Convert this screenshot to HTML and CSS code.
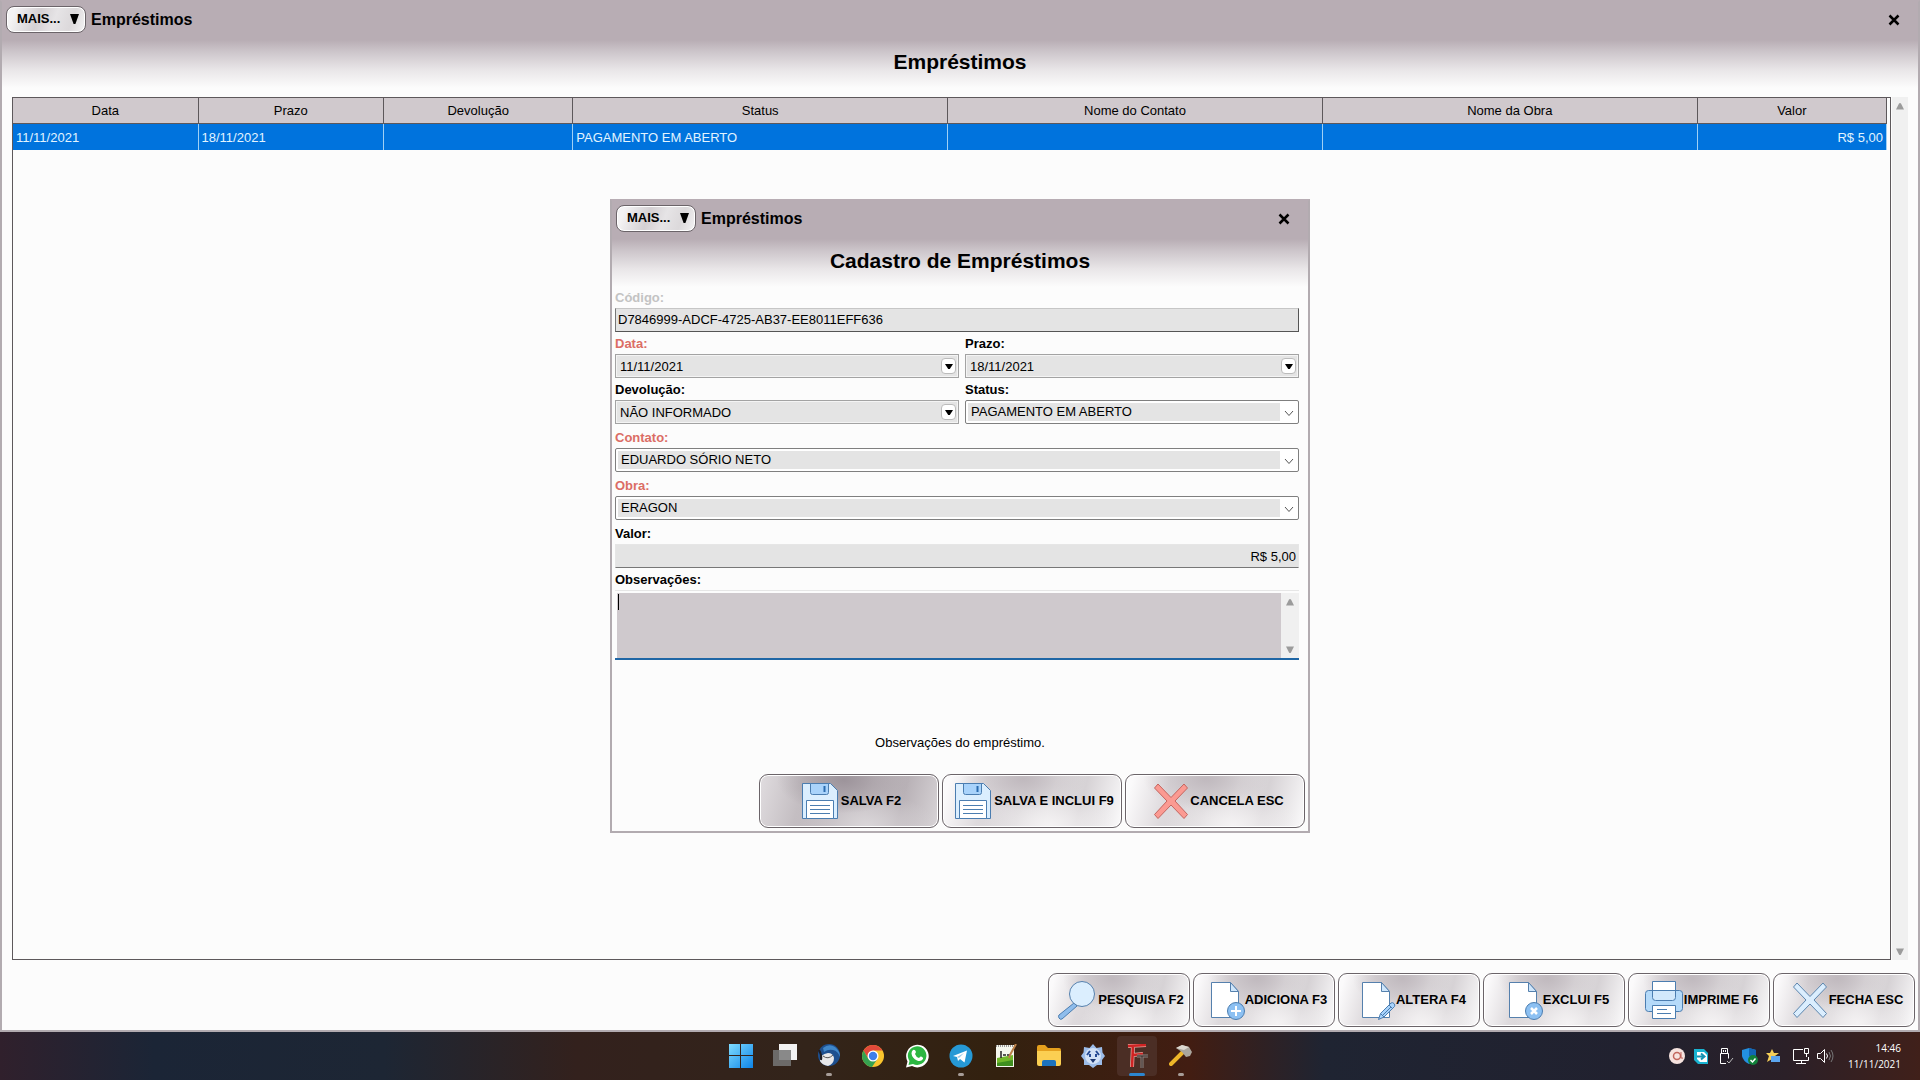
FILE: index.html
```html
<!DOCTYPE html>
<html lang="pt-BR">
<head>
  <meta charset="UTF-8" />
  <meta name="viewport" content="width=device-width,initial-scale=1" />
  <title>Empréstimos</title>
  <link rel="stylesheet" href="styles.css">
</head>
<body>
  <!-- shared icons -->
  <svg class="sprite" aria-hidden="true">
    <symbol id="i-doc" viewBox="0 0 40 40">
      <path d="M6.500 2.500h19l8 9v26h-27z" fill="#fff" stroke="#5580ad" />
      <path d="M25.500 2.500v9h8z" fill="#cfe6fb" stroke="#5580ad" />
    </symbol>
    <symbol id="i-floppy" viewBox="0 0 40 40">
      <path d="M3.500 2.500h28l7 7v28h-35z" fill="#dbeefe" stroke="#4b7db0" />
      <path d="M11.500 2.500h18v9q0 2-2 2h-14q-2 0-2-2z" fill="#a9d3fb" stroke="#4b7db0" />
      <path d="M25.500 5v6" stroke="#2b6cb0" stroke-width="2" />
      <path d="M7.500 37.500v-18h27v18z" fill="#fff" stroke="#4b7db0" />
      <path d="M11 24.500h20M11 28.500h20M11 32.500h20" stroke="#4b7db0" />
    </symbol>
    <symbol id="i-x" viewBox="-3 0 40 40">
      <path d="M7 3l13 13.500L33 3l3.500 4L24 20l12.500 13.500-3.500 4L20 24 7 37.500l-3.500-4L16 20 3.500 7z" stroke-linejoin="round" />
    </symbol>
    <symbol id="i-close" viewBox="0 0 12 12">
      <path d="M1.500 1.500l9 9M10.500 1.500l-9 9" stroke="#000" stroke-width="2.500" />
    </symbol>
    <symbol id="i-chev" viewBox="0 0 18 18">
      <path d="M5 8l4 4.500L13 8" fill="none" stroke="#555" />
    </symbol>
    <symbol id="i-up" viewBox="0 0 10 8"><path d="M1 7.500L4 1.500q1-1 2 0l3 6z" fill="#9b9b9b" /></symbol>
    <symbol id="i-down" viewBox="0 0 10 8"><path d="M1 .5l3 6q1 1 2 0l3-6z" fill="#9b9b9b" /></symbol>
    <symbol id="i-drop" viewBox="0 0 10 10" preserveAspectRatio="none"><path d="M0 0h10L6 10H4z" fill="#000" /></symbol>
  </svg>

  <main class="window">
    <header class="window-head">
      <div class="titlebar">
        <button class="more" type="button">MAIS... <svg><use href="#i-drop" /></svg></button>
        <span class="title">Empréstimos</span>
        <button class="close" type="button" aria-label="Fechar"><svg><use href="#i-close" /></svg></button>
      </div>
      <h1>Empréstimos</h1>
    </header>

    <div class="list">
      <div class="list-box">
        <table>
          <colgroup>
            <col class="col-date"><col class="col-date"><col class="col-small">
            <col class="col-wide"><col class="col-wide"><col class="col-wide"><col class="col-small">
          </colgroup>
          <thead>
            <tr><th>Data</th><th>Prazo</th><th>Devolução</th><th>Status</th><th>Nome do Contato</th><th>Nome da Obra</th><th>Valor</th></tr>
          </thead>
          <tbody>
            <tr class="selected"><td>11/11/2021</td><td>18/11/2021</td><td></td><td>PAGAMENTO EM ABERTO</td><td></td><td></td><td class="money">R$ 5,00</td></tr>
          </tbody>
        </table>
      </div>
      <div class="scroll"><svg><use href="#i-up" /></svg><svg><use href="#i-down" /></svg></div>
    </div>

    <div class="actions">
      <button class="btn" type="button">
        <svg viewBox="0 0 40 40"><path d="M18 23l3 3L6 39q-2 1-3-1t0-3z" fill="#8fbdec" stroke="#4b7db0" /><circle cx="26" cy="14" r="12.500" fill="#dbeefe" stroke="#5580ad" /></svg>
        PESQUISA F2
      </button>
      <button class="btn" type="button">
        <svg viewBox="-2 0 40 40"><use href="#i-doc" /><circle cx="31" cy="31" r="8.500" fill="#8cc0f2" stroke="#4b7db0" /><path d="M31 26v10M26 31h10" stroke="#fff" stroke-width="2" /></svg>
        ADICIONA F3
      </button>
      <button class="btn" type="button">
        <svg viewBox="-2 0 40 40"><use href="#i-doc" /><path d="M22.500 39.500l2-6L35 23q1.500-1 3 .5t.5 3L28 37z" fill="#a9d3fb" stroke="#4b7db0" /><path d="M24.500 33.500l3.500 3.500M33 25l3.500 3.500M27 35l8-8" stroke="#4b7db0" fill="none" /></svg>
        ALTERA F4
      </button>
      <button class="btn" type="button">
        <svg viewBox="-2 0 40 40"><use href="#i-doc" /><circle cx="31" cy="31" r="8.500" fill="#8cc0f2" stroke="#4b7db0" /><path d="M28 28l6 6M34 28l-6 6" stroke="#fff" stroke-width="2.500" /></svg>
        EXCLUI F5
      </button>
      <button class="btn" type="button">
        <svg viewBox="-2 0 40 40"><rect x="1.500" y="10.500" width="37" height="21" rx="3" fill="#b5daf9" stroke="#4b7db0" /><path d="M8.500 1.500h23v16q0 3-3 3h-17q-3 0-3-3z" fill="#d3e9fc" stroke="#4b7db0" /><path d="M9 2h22v8H9z" fill="#fff" /><path d="M8.500 10.500h23" stroke="#4b7db0" /><path d="M8.500 25.500h23v13h-23z" fill="#fff" stroke="#4b7db0" /><path d="M13 29.500h10M13 33.500h14" stroke="#4b7db0" /></svg>
        IMPRIME F6
      </button>
      <button class="btn" type="button">
        <svg class="x-blue"><use href="#i-x" /></svg>
        FECHA ESC
      </button>
    </div>

    <div class="overlay">
      <form class="window dialog" onsubmit="return false">
        <div class="window-head">
          <div class="titlebar">
            <button class="more" type="button">MAIS... <svg><use href="#i-drop" /></svg></button>
            <span class="title">Empréstimos</span>
            <button class="close" type="button" aria-label="Fechar"><svg><use href="#i-close" /></svg></button>
          </div>
          <h2>Cadastro de Empréstimos</h2>
        </div>

        <div class="fields">
          <div class="field">
            <label class="disabled" for="codigo">Código:</label>
            <input class="box box-code" id="codigo" type="text" value="D7846999-ADCF-4725-AB37-EE8011EFF636" readonly>
          </div>
          <div class="pair">
            <div class="field">
              <label class="required" for="data">Data:</label>
              <div class="box box-date"><input id="data" type="text" value="11/11/2021"><button type="button" aria-label="Calendário"><svg><use href="#i-drop" /></svg></button></div>
            </div>
            <div class="field">
              <label for="prazo">Prazo:</label>
              <div class="box box-date"><input id="prazo" type="text" value="18/11/2021"><button type="button" aria-label="Calendário"><svg><use href="#i-drop" /></svg></button></div>
            </div>
          </div>
          <div class="pair">
            <div class="field">
              <label for="devolucao">Devolução:</label>
              <div class="box box-date"><input id="devolucao" type="text" value="NÃO INFORMADO"><button type="button" aria-label="Calendário"><svg><use href="#i-drop" /></svg></button></div>
            </div>
            <div class="field">
              <label for="status">Status:</label>
              <div class="box box-combo"><select id="status"><option>PAGAMENTO EM ABERTO</option></select><svg><use href="#i-chev" /></svg></div>
            </div>
          </div>
          <div class="field spaced">
            <label class="required" for="contato">Contato:</label>
            <div class="box box-combo"><select id="contato"><option>EDUARDO SÓRIO NETO</option></select><svg><use href="#i-chev" /></svg></div>
          </div>
          <div class="field spaced">
            <label class="required" for="obra">Obra:</label>
            <div class="box box-combo"><select id="obra"><option>ERAGON</option></select><svg><use href="#i-chev" /></svg></div>
          </div>
          <div class="field spaced">
            <label for="valor">Valor:</label>
            <input class="box box-money" id="valor" type="text" value="R$ 5,00">
          </div>
          <div class="field">
            <label for="obs">Observações:</label>
            <div class="memo">
              <textarea id="obs"></textarea>
              <span class="caret"></span>
              <div class="scroll"><svg><use href="#i-up" /></svg><svg><use href="#i-down" /></svg></div>
            </div>
          </div>
        </div>

        <p class="hint">Observações do empréstimo.</p>

        <div class="actions">
          <button class="btn btn-active" type="submit"><svg><use href="#i-floppy" /></svg>SALVA F2</button>
          <button class="btn" type="button"><svg><use href="#i-floppy" /></svg>SALVA E INCLUI F9</button>
          <button class="btn" type="button"><svg class="x-red"><use href="#i-x" /></svg>CANCELA ESC</button>
        </div>
      </form>
    </div>
  </main>

  <footer class="taskbar">
    <div class="apps">
      <div class="app">
        <svg viewBox="0 0 24 24"><defs><linearGradient id="win" x2="1" y2="1"><stop offset="0" stop-color="#7fdcff" /><stop offset="1" stop-color="#0d84e8" /></linearGradient></defs><path d="M0 0h11v11H0zM12 0h12v11H12zM0 12h11v12H0zM12 12h12v12H12z" fill="url(#win)" /></svg>
      </div>
      <div class="app">
        <svg viewBox="0 0 24 24"><path d="M6 0h18v16H6z" fill="#f2f2f2" /><path d="M0 6h18v16H0z" fill="#777" opacity=".85" /></svg>
      </div>
      <div class="app open">
        <svg viewBox="0 0 24 24"><circle cx="12" cy="11" r="11" fill="#1d4f8f" /><path d="M6 4Q12-1 18 3q5 4 5 10-2-6-7-7-5-1-9 2z" fill="#3f86c8" /><path d="M3 17q0-7 8-8 5 0 6 5 0 6-6 8-6-1-8-5z" fill="#e8e8ea" /><path d="M6 12q5 4 10-1" fill="none" stroke="#555" /><path d="M2 6q3 5 2 10" stroke="#1c1c24" stroke-width="2" fill="none" /></svg>
      </div>
      <div class="app">
        <svg viewBox="0 0 24 24"><circle cx="12" cy="12" r="11" fill="#fbc52d" /><path d="M2.500 6.500A11 11 0 0 1 21.500 6.500H12L7.300 14.700z" fill="#e1493a" /><path d="M2.500 6.500A11 11 0 0 0 11 23l5.700-8.500L12 17l-4.500-2z" fill="#36a251" /><circle cx="12" cy="12" r="5.500" fill="#fff" /><circle cx="12" cy="12" r="4.200" fill="#3f7fe8" /></svg>
      </div>
      <div class="app">
        <svg viewBox="0 0 24 24"><path d="M1 23.500l1.500-6A11.300 11.300 0 1 1 7 22z" fill="#fff" /><path d="M3.500 21l1-4A9.300 9.300 0 1 1 8 20z" fill="#2cb742" /><path d="M8 6q2-1 3 2l-1 2q1 3 4 4l1.500-1.500q3 .5 2.500 2.500-2 3-6 1.500Q7 14 6.500 9.500 6.500 7 8 6z" fill="#fff" /></svg>
      </div>
      <div class="app open">
        <svg viewBox="0 0 24 24"><circle cx="12" cy="12" r="11.500" fill="#2699d6" /><path d="M4 12l14-5.500-2.500 12-4.500-3.500-2 2-1-4z" fill="#fff" /><path d="M8 13l7-4-5 5z" fill="#9cc9e4" /></svg>
      </div>
      <div class="app">
        <svg viewBox="0 0 24 24"><path d="M3 1h18v22H3z" fill="#f5f7ee" /><path d="M4 14l16-3v11H4z" fill="#72b82a" /><path d="M4 19l16-3v6H4z" fill="#3f8f1f" /><path d="M3 2h18" stroke="#999" stroke-width="2" stroke-dasharray="1 1" /><path d="M8 7v7M10 11h3M14 11h3" stroke="#222" stroke-width="1.500" /><path d="M23 0l-6 11-1 3" stroke="#bd824a" stroke-width="2" fill="none" /></svg>
      </div>
      <div class="app">
        <svg viewBox="0 0 24 24"><path d="M0 3q0-2 2-2h6l3 3h11q2 0 2 2v4H0z" fill="#e5a01d" /><path d="M0 7h24v13q0 2-2 2H2q-2 0-2-2z" fill="#fbcf52" /><path d="M5 22v-4q0-2 2-2h10q2 0 2 2v4z" fill="#1d73bd" /></svg>
      </div>
      <div class="app">
        <svg viewBox="0 0 24 24"><path d="M12 0l3.500 4 5.500-1 .5 5.500L24 12l-3 4v5h-5l-4 3-4-3H3v-5l-3-4 2.500-3.500L3 3l5.500 1z" fill="#9cbce8" /><circle cx="12" cy="12" r="8" fill="#d3e2f6" /><path d="M9 7l-3 4M15 7l3 4M9 10v3M15 10v3" stroke="#274b94" stroke-width="2" /><path d="M9 15h6l-3 4z" fill="#1e3973" /></svg>
      </div>
      <div class="app current">
        <svg viewBox="0 0 24 24"><path d="M3 2l18-1M8 2L7 23M8 11l10-1" fill="none" stroke="#e0a49c" stroke-width="4" /><path d="M3 2l18-1M8 2L7 23M8 11l10-1" fill="none" stroke="#cf2323" stroke-width="2.500" /><path d="M12 12h11M17 12v12" fill="none" stroke="#8d8582" stroke-width="3" /><path d="M12 12h11M17 12v12" fill="none" stroke="#3a2a26" /></svg>
      </div>
      <div class="app open">
        <svg viewBox="0 0 24 24"><path d="M2 20L14 8" stroke="#eeb629" stroke-width="4" stroke-linecap="round" /><path d="M7 4l6-3 7 2 3 5-2 4-4 1-4-5z" fill="#aaa59d" /><path d="M7 4l6-3 7 2-5 3z" fill="#ddd8d0" /></svg>
      </div>
    </div>
    <div class="tray">
      <svg viewBox="0 0 24 24"><circle cx="12" cy="12" r="8" fill="#f6e3df" /><circle cx="12" cy="12" r="3.500" fill="none" stroke="#c2655c" stroke-width="1.500" /><path d="M16 8v5q0 2 2 1" fill="none" stroke="#c2655c" /></svg>
      <svg viewBox="0 0 24 24"><path d="M5 5h10l4 4v11H9l-4-4z" fill="#19b3d1" /><path d="M8 8h7l3 3v7h-7l-3-3z" fill="#fff" /><path d="M8 12.500h7M12 9.500l3.500 3-3.500 3" fill="none" stroke="#1593b2" stroke-width="2" /></svg>
      <svg viewBox="0 0 24 24" fill="none" stroke="#fff"><path d="M8.500 9.500v-5h6v5M13 19.500H7.500v-10h8v5M10.500 6v2M12.500 6v2" /><path d="M14 17l2 2 4-5" stroke="#bbb" /></svg>
      <svg viewBox="0 0 24 24"><path d="M12 4l7 2v6q-1 5-7 8-6-3-7-8V6z" fill="#2390e0" /><path d="M12 4l7 2v6h-7z" fill="#1266b5" /><circle cx="16" cy="16" r="5" fill="#12813b" /><path d="M13.500 16l2 2 3-3.500" fill="none" stroke="#fff" stroke-width="1.500" /></svg>
      <svg viewBox="0 0 24 24"><path d="M11 5l2 4h5l-4 3 1 5-4-2-5 3 2-6-3-3h4z" fill="#f5cf58" /><path d="M10 12h9v6h-9z" fill="#5ba5ee" /></svg>
      <svg class="network" viewBox="0 0 24 24" fill="none" stroke="#fff"><path d="M14 5.500H4.500v11h15V13M12.500 16.500v3M7 19.500h10M15.500 4.500h4v5h-4zM17.500 9.500V13" /></svg>
      <svg viewBox="0 0 24 24" fill="none" stroke="#fff"><path d="M4.500 9.500h3l4-4v13l-4-4h-3zM13.500 9.500q2 2.500 0 5" /><path d="M16 8q3 4 0 8M18 6q4 6 0 12" stroke="#777" /></svg>
      <div class="clock"><span>14:46</span><span>11/11/2021</span></div>
    </div>
  </footer>
</body>
</html>
```

FILE: styles.css
```css
* {
  box-sizing: border-box;
}
body {
  margin: 0;
  height: 100vh;
  display: flex;
  flex-direction: column;
  font-family: "Liberation Sans", Arial, sans-serif;
  font-size: 13px;
  color: #000;
  background: #fcfcfc;
  overflow: hidden;
}
button, input, select, textarea {
  font: inherit;
  color: inherit;
}
button {
  padding: 0;
}
.sprite {
  display: none;
}

/* windows */
.window {
  position: relative;
  flex: 1;
  display: flex;
  flex-direction: column;
  min-height: 0;
  border: 2px solid #b2abb0;
  border-top-color: #b8adb4;
  background: #fcfcfc;
}
.window-head {
  padding: 4px 4px 0;
  height: 89px;
  background: linear-gradient(#b8adb4 38px, #cdc6cb 50px, #e9e6e8 68px, #fcfcfc 86px);
}
.titlebar {
  display: flex;
  align-items: center;
  gap: 5px;
}
.title {
  flex: 1;
  font-size: 16px;
  font-weight: bold;
}
.more {
  display: flex;
  align-items: center;
  justify-content: space-between;
  width: 80px;
  height: 27px;
  padding: 0 6px 2px 10px;
  border: 1px solid #6b6469;
  border-radius: 8px;
  font-weight: bold;
  background: linear-gradient(110deg, #f4f3f4 10%, #d4d0d3 40%, #e6e4e6 60%, #dcd9db 80%, #f4f3f4);
  box-shadow: inset 0 0 0 1px #fff;
}
.more svg {
  width: 9px;
  height: 10px;
}
.close {
  display: flex;
  justify-content: center;
  width: 40px;
  border: none;
  background: none;
}
.close svg {
  width: 12px;
  height: 12px;
}
h1, h2 {
  margin: 17px 0 0;
  font-size: 21px;
  line-height: 24px;
  text-align: center;
}

/* loan list */
.list {
  flex: 1;
  display: flex;
  gap: 1px;
  padding: 6px 10px 13px;
}
.list-box {
  flex: 1;
  padding-right: 3px;
  border: 1px solid #5d585b;
}
table {
  width: 100%;
  table-layout: fixed;
  border-spacing: 0;
}
.col-date {
  width: 9.9%;
}
.col-small {
  width: 10.1%;
}
.col-wide {
  width: 20%;
}
th, td {
  height: 26px;
  padding: 0 3px;
  border-right: 1px solid #5d585b;
  font-weight: normal;
}
th {
  background: #d0c9cd;
  border-bottom: 1px solid #5d585b;
}
.selected td {
  background: #0073dd;
  color: #e2f4ff;
  border-right-color: #9fd0f5;
}
.money {
  text-align: right;
}
.scroll {
  display: flex;
  flex-direction: column;
  align-items: center;
  justify-content: space-between;
  width: 16px;
  padding: 5px 0 4px;
  background: #f0f0f0;
}
.scroll svg {
  width: 10px;
  height: 8px;
}

/* command buttons */
.actions {
  display: flex;
  justify-content: flex-end;
  gap: 3px;
  padding: 0 3px 3px;
}
.btn {
  display: flex;
  align-items: center;
  justify-content: center;
  gap: 2px;
  width: 142px;
  height: 54px;
  padding: 0 0 1px 2px;
  border: 1px solid #6b6469;
  border-radius: 9px;
  font-weight: bold;
  white-space: nowrap;
  background:
    radial-gradient(ellipse at 45% 8%, #c0b9be 0, rgba(192, 185, 190, 0) 45%),
    radial-gradient(ellipse at 60% 95%, #f4f2f3 0, rgba(244, 242, 243, 0) 45%),
    linear-gradient(105deg, #fbfafb 4%, #dedadd 24%, #d8d4d7 45%, #e2dfe1 60%, #d6d2d5 76%, #f8f7f8 98%);
  box-shadow: inset 0 0 0 1px #fff;
}
.btn svg {
  flex: none;
  width: 40px;
  height: 40px;
  overflow: visible;
}
.btn-active {
  background:
    radial-gradient(ellipse at 47% 10%, #9d949b 0, rgba(157, 148, 155, 0) 50%),
    radial-gradient(ellipse at 60% 95%, #d9d5d8 0, rgba(217, 213, 216, 0) 45%),
    linear-gradient(105deg, #dedadd 2%, #c4bec2 24%, #bdb6bb 45%, #c4bec2 60%, #b9b2b7 78%, #d8d4d7 100%);
}
.x-blue {
  fill: #dbeefe;
  stroke: #5d86ae;
}
.x-red {
  fill: #fb9a92;
  stroke: #c4655f;
}

/* loan form */
.overlay {
  position: absolute;
  inset: 0;
  display: flex;
  align-items: center;
  justify-content: center;
}
.dialog {
  flex: none;
  width: 700px;
}
.fields {
  padding: 0 9px 0 3px;
}
.pair {
  display: grid;
  grid-template-columns: 344px 1fr;
  gap: 6px;
}
.field {
  padding-bottom: 4px;
}
.spaced {
  padding-top: 2px;
}
label {
  display: block;
  height: 18px;
  line-height: 16px;
  font-weight: bold;
}
.required {
  color: #db6d65;
}
.disabled {
  color: #c3c3c3;
}
.box {
  display: flex;
  width: 100%;
  height: 24px;
  border: 1px solid #a3a3a3;
  background: #e4e4e4;
}
.box input, .box select {
  flex: 1;
  min-width: 0;
  border: none;
  outline: none;
  background: none;
}
.box-code {
  padding: 0 2px 2px;
  border-color: #c6c6c6 #555 #555 #777;
}
.box-date {
  box-shadow: inset 0 0 0 1px #f4f4f4;
}
.box-date input {
  padding: 0 4px;
}
.box-date button {
  width: 15px;
  margin: 3px 2px;
  border: 1px solid #bbb;
  border-radius: 4px;
  background: #fff;
  display: flex;
  align-items: center;
  justify-content: center;
}
.box-date svg {
  width: 8px;
  height: 5px;
}
.box-combo {
  padding: 2px 0 2px 2px;
  border-color: #7f7f7f;
  border-radius: 2px;
  background: #fff;
}
.box-combo select {
  appearance: none;
  padding: 0 3px 2px;
  background: #e4e4e4;
}
.box-combo svg {
  width: 18px;
  height: 18px;
}
.box-money {
  padding: 0 2px;
  border-color: #e6e6e6 #e6e6e6 #777;
  text-align: right;
}
.memo {
  position: relative;
  display: flex;
  height: 70px;
  padding: 2px 0 0 2px;
  border-top: 1px solid #e6e6e6;
  border-bottom: 2px solid #1f66a5;
}
.memo textarea {
  flex: 1;
  padding: 2px;
  border: none;
  outline: none;
  resize: none;
  background: #cfc9cd;
}
.memo .scroll {
  width: 18px;
}
.caret {
  position: absolute;
  left: 3px;
  top: 3px;
  width: 1px;
  height: 16px;
  background: #000;
}
.hint {
  margin: 71px 0 23px;
  line-height: 16px;
  text-align: center;
}
.dialog .btn {
  width: 180px;
}

/* taskbar */
.taskbar {
  display: grid;
  grid-template-columns: 1fr auto 1fr;
  height: 48px;
  background: linear-gradient(90deg, #30202c, #1b2536 8%, #1d2634 20%, #33211d 30%, #33241a 42%, #33210f 52%, #421d12 62%, #1f2432 69%, #21212f 85%, #2b2028 93%, #40201a);
}
.apps {
  grid-column: 2;
  display: flex;
  gap: 4px;
  padding: 4px 0 4px 2px;
}
.app {
  display: flex;
  flex-direction: column;
  align-items: center;
  justify-content: space-between;
  width: 40px;
  height: 40px;
  padding-top: 8px;
  border-radius: 4px;
}
.app svg {
  width: 24px;
  height: 24px;
}
.open::after, .current::after {
  content: "";
  width: 6px;
  height: 3px;
  border-radius: 2px;
  background: #a79d98;
}
.current {
  background: #4b2e25;
}
.current::after {
  width: 16px;
  background: #2c86d0;
}
.tray {
  grid-column: 3;
  display: flex;
  align-items: center;
  justify-content: flex-end;
  padding-right: 19px;
}
.tray svg {
  width: 24px;
  height: 24px;
}
.tray .network {
  margin-left: 4px;
}
.clock {
  display: flex;
  flex-direction: column;
  width: 64px;
  font-family: "Open Sans", sans-serif;
  font-size: 10px;
  line-height: 16px;
  text-align: right;
  color: #fff;
}
```
